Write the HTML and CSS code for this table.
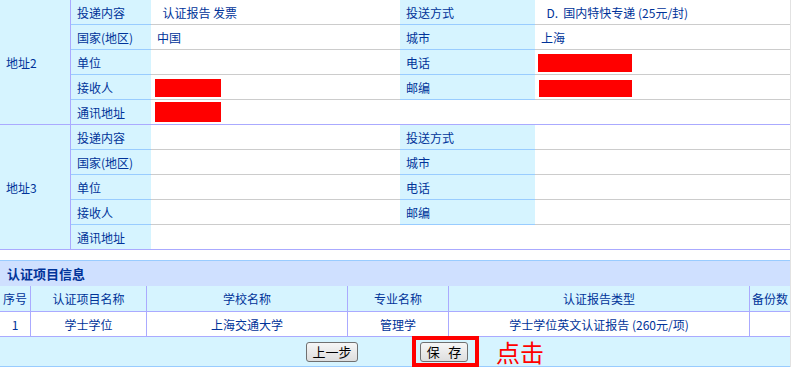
FILE: index.html
```html
<!DOCTYPE html>
<html lang="zh-CN">
<head>
<meta charset="utf-8">
<title>认证项目</title>
<link rel="stylesheet" href="styles.css">
</head>
<body>
<div class="page">
  <table class="addr">
    <tbody>
      <tr>
        <td class="blk w1" rowspan="5">地址2</td>
        <td class="lbl w2">投递内容</td>
        <td class="val w3">&nbsp;&nbsp;认证报告 发票</td>
        <td class="lbl w4">投送方式</td>
        <td class="val w5">&nbsp;&nbsp;D.&nbsp;&nbsp;国内特快专递 (25元/封)</td>
      </tr>
      <tr>
        <td class="lbl">国家(地区)</td>
        <td class="val">中国</td>
        <td class="lbl">城市</td>
        <td class="val">上海</td>
      </tr>
      <tr>
        <td class="lbl">单位</td>
        <td class="val"></td>
        <td class="lbl">电话</td>
        <td class="val"><span class="redact r3"></span></td>
      </tr>
      <tr>
        <td class="lbl">接收人</td>
        <td class="val"><span class="redact r1"></span></td>
        <td class="lbl">邮编</td>
        <td class="val"><span class="redact r4"></span></td>
      </tr>
      <tr class="last">
        <td class="lbl">通讯地址</td>
        <td class="val" colspan="3"><span class="redact r2"></span></td>
      </tr>
    </tbody>
    <tbody>
      <tr>
        <td class="blk" rowspan="5">地址3</td>
        <td class="lbl">投递内容</td>
        <td class="val"></td>
        <td class="lbl">投送方式</td>
        <td class="val"></td>
      </tr>
      <tr>
        <td class="lbl">国家(地区)</td>
        <td class="val"></td>
        <td class="lbl">城市</td>
        <td class="val"></td>
      </tr>
      <tr>
        <td class="lbl">单位</td>
        <td class="val"></td>
        <td class="lbl">电话</td>
        <td class="val"></td>
      </tr>
      <tr>
        <td class="lbl">接收人</td>
        <td class="val"></td>
        <td class="lbl">邮编</td>
        <td class="val"></td>
      </tr>
      <tr class="last">
        <td class="lbl">通讯地址</td>
        <td class="val" colspan="3"></td>
      </tr>
    </tbody>
  </table>

  <section class="sec">
    <div class="sec-title">认证项目信息</div>
    <table class="items">
      <tr>
        <th class="k1">序号</th>
        <th class="k2">认证项目名称</th>
        <th class="k3">学校名称</th>
        <th class="k4">专业名称</th>
        <th class="k5">认证报告类型</th>
        <th class="k6">备份数</th>
      </tr>
      <tr>
        <td>1</td>
        <td>学士学位</td>
        <td>上海交通大学</td>
        <td>管理学</td>
        <td>学士学位英文认证报告 (260元/项)</td>
        <td></td>
      </tr>
    </table>
    <div class="actions">
      <button class="btn btn-prev" type="button">上一步</button>
      <button class="btn btn-save" type="button">保&nbsp;&nbsp;&nbsp;存</button>
      <span class="hl-box"></span>
      <span class="hl-text">点击</span>
    </div>
  </section>
</div>
</body>
</html>
```
FILE: styles.css
```css
html, body {
  margin: 0;
  padding: 0;
  background: #fff;
}

body {
  font-family: "Noto Sans CJK SC", "Noto Sans", sans-serif;
  font-size: 12px;
  color: #003399;
}

.page {
  width: 790px;
  border-right: 1px solid #e2e2e2;
}

/* address tables */
.addr {
  width: 790px;
  border-collapse: separate;
  border-spacing: 0;
  table-layout: fixed;
}

.addr td {
  box-sizing: border-box;
  height: 25px;
  padding: 0 6px;
  white-space: nowrap;
  overflow: hidden;
  vertical-align: middle;
}

.w1 { width: 71px; }
.w2 { width: 80px; }
.w3 { width: 249px; }
.w4 { width: 135px; }
.w5 { width: 255px; }

.blk {
  border-right: 1px solid #aaaaff;
  border-bottom: 1px solid #aaaaff;
  background: #d6f4ff;
}

.lbl {
  background: #d6f4ff;
  border-bottom: 1px solid #99ccff;
}

.val {
  background: #fff;
  border-bottom: 1px solid #cccccc;
}

.last td {
  border-bottom: 1px solid #aaaaff;
}

.redact {
  display: inline-block;
  background: #ff0000;
  vertical-align: middle;
}

.r1 { width: 66px; height: 18px; margin-left: -2px; }
.r2 { width: 66px; height: 20px; margin-left: -2px; }
.r3 { width: 94px; height: 18px; margin-left: -3px; }
.r4 { width: 93px; height: 17px; margin-left: -2px; }

/* item section */
.sec {
  margin-top: 10px;
  border-top: 1px solid #99ccff;
}

.sec-title {
  height: 25px;
  line-height: 25px;
  padding-left: 7px;
  background: #cfe0ff;
  font-size: 13px;
  font-weight: bold;
  color: #003399;
}

.items {
  width: 790px;
  border-collapse: separate;
  border-spacing: 0;
  table-layout: fixed;
}

.items th,
.items td {
  box-sizing: border-box;
  padding: 0;
  text-align: center;
  vertical-align: middle;
  white-space: nowrap;
  overflow: hidden;
  font-weight: normal;
  border-bottom: 1px solid #aaaaff;
  border-right: 1px solid #aaaaff;
}

.items th:last-child,
.items td:last-child {
  border-right: none;
}

.items th {
  height: 26px;
  background: #d6f4ff;
}

.items td {
  height: 25px;
  background: #fff;
}

.k1 { width: 31px; }
.k2 { width: 116px; }
.k3 { width: 201px; }
.k4 { width: 101px; }
.k5 { width: 301px; }
.k6 { width: 40px; }

.actions {
  position: relative;
  display: flex;
  align-items: flex-start;
  height: 29px;
  padding: 5px 0 0 306px;
  box-sizing: border-box;
  height: 30px;
  background: #d6f4ff;
  border-bottom: 1px solid #99ccff;
}

.btn {
  box-sizing: border-box;
  height: 20px;
  padding: 0;
  border: 1px solid #707070;
  border-radius: 3px;
  background: linear-gradient(#f6f6f6, #dedede);
  font-family: "Noto Sans CJK SC", sans-serif;
  font-size: 13px;
  line-height: 18px;
  color: #000;
}

.btn-prev { width: 52px; }
.btn-save { width: 48px; margin-left: 62px; }

.hl-box {
  position: absolute;
  left: 412px;
  top: -1px;
  width: 67px;
  height: 31px;
  box-sizing: border-box;
  border: 4px solid #ff0000;
}

.hl-text {
  position: absolute;
  left: 496px;
  top: 0;
  font-size: 24px;
  line-height: 30px;
  color: #ff0000;
}
```
